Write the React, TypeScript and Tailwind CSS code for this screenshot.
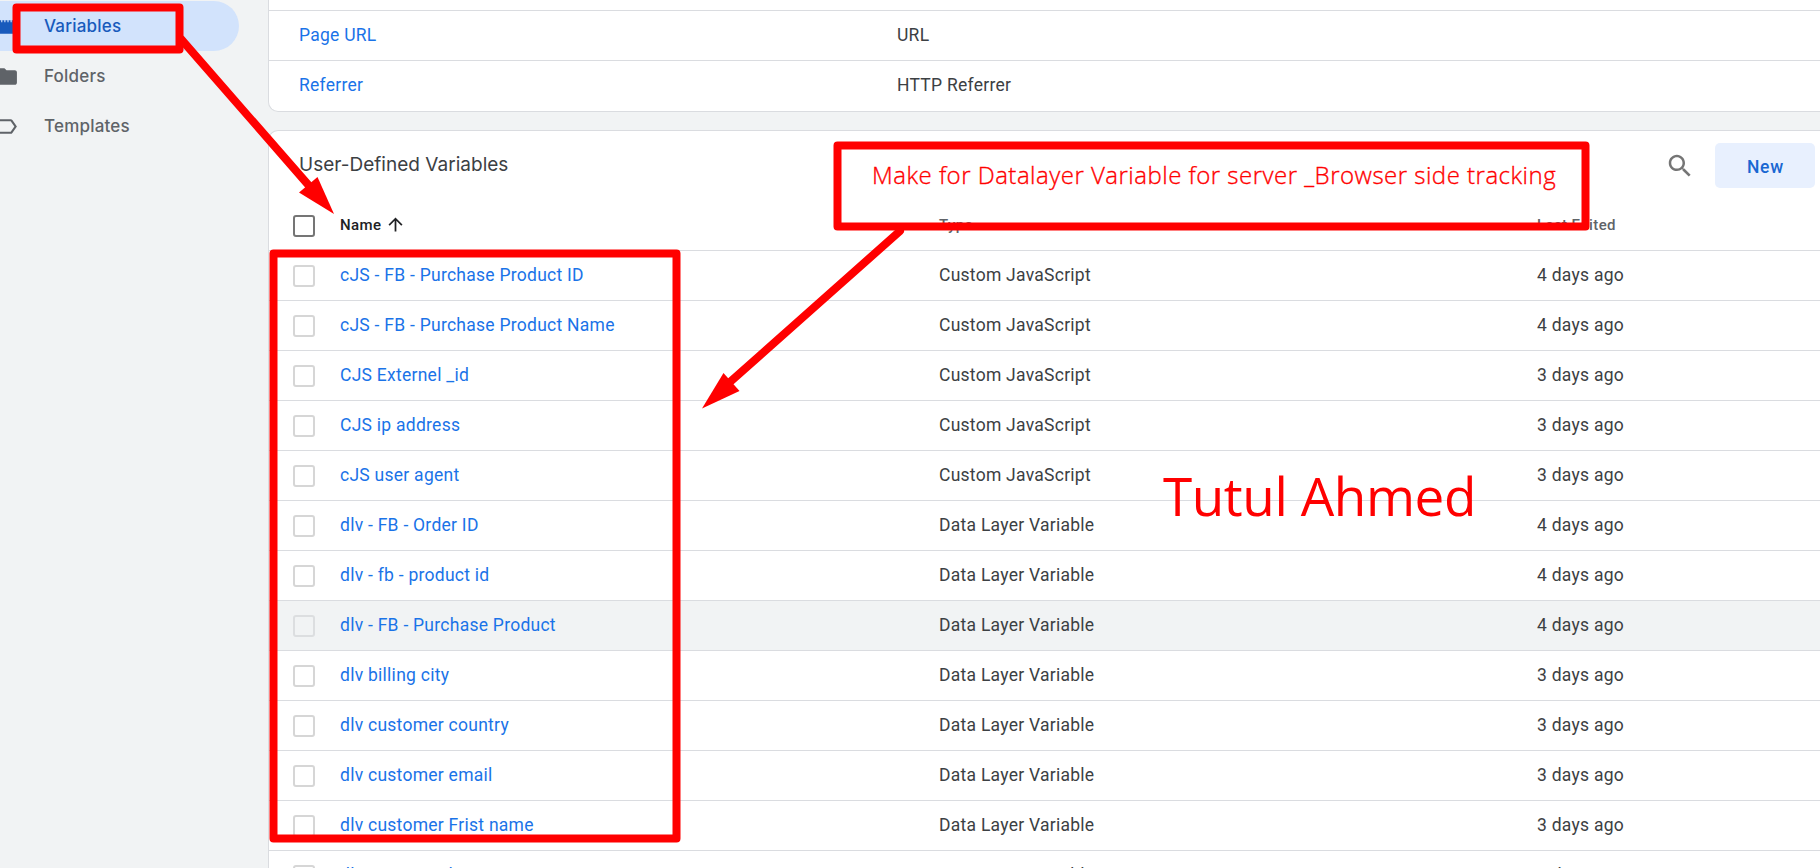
import React from "react";

type Row = { name: string; type: string; edited: string; hovered?: boolean };

const CJS = "Custom JavaScript";
const DLV = "Data Layer Variable";

const rows: Row[] = [
  { name: "cJS - FB - Purchase Product ID", type: CJS, edited: "4 days ago" },
  { name: "cJS - FB - Purchase Product Name", type: CJS, edited: "4 days ago" },
  { name: "CJS Externel _id", type: CJS, edited: "3 days ago" },
  { name: "CJS ip address", type: CJS, edited: "3 days ago" },
  { name: "cJS user agent", type: CJS, edited: "3 days ago" },
  { name: "dlv - FB - Order ID", type: DLV, edited: "4 days ago" },
  { name: "dlv - fb - product id", type: DLV, edited: "4 days ago" },
  { name: "dlv - FB - Purchase Product", type: DLV, edited: "4 days ago", hovered: true },
  { name: "dlv billing city", type: DLV, edited: "3 days ago" },
  { name: "dlv customer country", type: DLV, edited: "3 days ago" },
  { name: "dlv customer email", type: DLV, edited: "3 days ago" },
  { name: "dlv customer Frist name", type: DLV, edited: "3 days ago" },
  { name: "dlv customer last name", type: DLV, edited: "3 days ago" },
];

function NavItem({ label, active, children }: { label: string; active?: boolean; children: React.ReactNode }) {
  return (
    <a
      className={`flex h-[50px] w-[239px] items-center rounded-r-full font-[Inter,sans-serif] text-[17px] font-medium tracking-[0.2px] ${
        active ? "bg-[#d2e3fc] text-[#185abc]" : "text-[#5f6368]"
      }`}
    >
      <svg viewBox="0 0 24 24" className="-ml-[6px] mr-[25px] size-[25px] shrink-0" fill="currentColor">
        {children}
      </svg>
      <span className="pt-[2px]">{label}</span>
    </a>
  );
}

function Sidebar() {
  return (
    <nav className="flex w-[268px] shrink-0 flex-col pt-px">
      <NavItem label="Variables" active>
        <path d="M2 19V8h3V6h1.900v2h1.100V6h1.900v2h1.100V6h1.900v2H14V6h1.900v2H17V6h1.900v2H22v11z" />
      </NavItem>
      <NavItem label="Folders">
        <path d="M10 4H4c-1.100 0-2 .9-2 2v12c0 1.100.9 2 2 2h16c1.100 0 2-.9 2-2V8c0-1.100-.9-2-2-2h-8l-2-2z" />
      </NavItem>
      <NavItem label="Templates">
        <path d="M17.630 5.840C17.270 5.330 16.670 5 16 5L5 5.010C3.900 5.010 3 5.900 3 7v10c0 1.100.9 1.990 2 1.990L16 19c.67 0 1.270-.33 1.630-.84L22 12l-4.370-6.160zM16 17H5V7h11l3.550 5L16 17z" />
      </NavItem>
    </nav>
  );
}

function Checkbox({ className }: { className: string }) {
  return <span className={`size-[22px] shrink-0 rounded-[3px] border-2 ${className}`} />;
}

function BuiltInCard() {
  return (
    <section className="flex flex-col rounded-bl-[10px] border-b border-l border-[#dadce0] bg-white pb-px pt-[10px]">
      {[
        ["Page URL", "URL"],
        ["Referrer", "HTTP Referrer"],
      ].map(([name, type]) => (
        <div key={name} className="flex h-[50px] items-center border-t border-[#dadce0] pl-[30px]">
          <span className="w-[598px] text-[#1a73e8]">{name}</span>
          <span>{type}</span>
        </div>
      ))}
    </section>
  );
}

function UserDefinedCard() {
  return (
    <section className="mt-[18px] flex flex-col rounded-tl-[10px] border-l border-t border-[#dadce0] bg-white">
      <header className="flex h-[70px] items-center pl-[30px] pr-[5px]">
        <h2 className="-mt-px flex-1 font-[Inter,sans-serif] text-[19px] tracking-[0.02px] text-[#3c4043]">
          User-Defined Variables
        </h2>
        <svg viewBox="0 0 24 24" className="mr-[20px] size-[30px]" fill="#757575">
          <path d="M15.500 14h-.79l-.28-.27C15.410 12.590 16 11.110 16 9.500 16 5.910 13.090 3 9.500 3S3 5.910 3 9.500 5.910 16 9.500 16c1.610 0 3.090-.59 4.230-1.570l.27.28v.79l5 4.990L20.490 19l-4.990-5zm-6 0C7.010 14 5 11.990 5 9.500S7.010 5 9.500 5 14 7.010 14 9.500 11.990 14 9.500 14z" />
        </svg>
        <button className="mb-px h-[45px] w-[100px] rounded-[5px] bg-[#e8f0fe] pl-px pt-[3px] font-medium tracking-[0.8px] text-[#1967d2]">
          New
        </button>
      </header>
      <div className="flex h-[49px] items-center pl-[24px] text-[15px] font-medium tracking-[0.38px] text-[#5f6368]">
        <Checkbox className="mr-[25px] border-[#757575]" />
        <span className="flex w-[599px] items-center text-[#202124]">
          Name
          <svg viewBox="0 0 24 24" className="ml-[4px] size-[21px] -translate-y-px" fill="currentColor">
            <path d="M4 12l1.410 1.410L11 7.830V20h2V7.830l5.580 5.590L20 12l-8-8-8 8z" />
          </svg>
        </span>
        <span className="w-[598px]">Type</span>
        <span>Last Edited</span>
      </div>
      {rows.map((r) => (
        <div
          key={r.name}
          className={`flex h-[50px] shrink-0 items-center border-t border-[#dadce0] pl-[24px] ${r.hovered ? "bg-[#f1f3f4]" : ""}`}
        >
          <Checkbox className={`mr-[25px] ${r.hovered ? "border-[#dcdee0]" : "border-[#d6d6d6]"}`} />
          <span className="w-[599px] text-[#1a73e8]">{r.name}</span>
          <span className="w-[598px]">{r.type}</span>
          <span>{r.edited}</span>
        </div>
      ))}
    </section>
  );
}

function Annotations() {
  return (
    <div className="pointer-events-none absolute inset-0 font-['Open_Sans',sans-serif] text-[#ff0000]">
      <svg
        viewBox="0 0 1820 868"
        className="absolute inset-0 size-full"
        fill="none"
        stroke="#ff0000"
        strokeWidth="8"
        strokeLinecap="round"
        strokeLinejoin="round"
      >
        <rect x="16.500" y="7.500" width="163" height="42" />
        <rect x="273.500" y="253.500" width="403" height="585" />
        <rect x="837.500" y="145.500" width="748" height="81" />
        <path d="M181 39L311 188" />
        <path d="M900 231L730 382" />
        <path d="M334 214L299 192.500L317.500 177z" fill="#ff0000" stroke="none" />
        <path d="M702 408.500L723.500 373L739.500 391z" fill="#ff0000" stroke="none" />
      </svg>
      <p className="absolute left-[872px] top-[159px] whitespace-nowrap text-[24px] font-light leading-[32px] tracking-[0.49px] [-webkit-text-stroke:0.35px_#ff0000]">
        Make for Datalayer Variable for server _Browser side tracking
      </p>
      <p className="absolute left-[1163px] top-[464px] whitespace-nowrap text-[53px] leading-[64px] tracking-[-0.42px]">
        Tutul Ahmed
      </p>
    </div>
  );
}

export default function App() {
  return (
    <div className="relative flex h-[868px] w-[1820px] overflow-hidden bg-[#f1f3f4] font-[Roboto,sans-serif] text-[17.5px] tracking-[0.26px] text-[#3c4043]">
      <Sidebar />
      <main className="flex min-w-0 flex-1 flex-col">
        <BuiltInCard />
        <UserDefinedCard />
      </main>
      <Annotations />
    </div>
  );
}
